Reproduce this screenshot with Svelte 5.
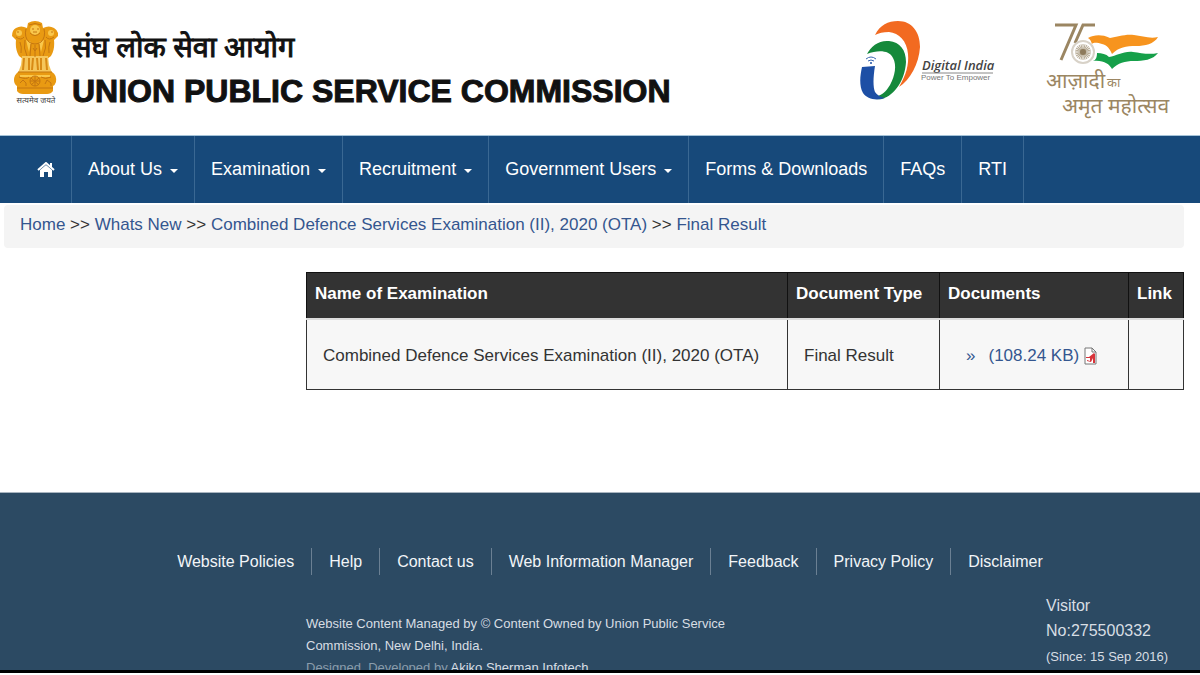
<script>
    const menu = [
        { label: "About Us", sub: true },
        { label: "Examination", sub: true },
        { label: "Recruitment", sub: true },
        { label: "Government Users", sub: true },
        { label: "Forms & Downloads", sub: false },
        { label: "FAQs", sub: false },
        { label: "RTI", sub: false },
    ];

    const crumbs = [
        "Home",
        "Whats New",
        "Combined Defence Services Examination (II), 2020 (OTA)",
        "Final Result",
    ];

    const footerLinks = [
        "Website Policies",
        "Help",
        "Contact us",
        "Web Information Manager",
        "Feedback",
        "Privacy Policy",
        "Disclaimer",
    ];

    const spokes = Array.from({ length: 24 }, (_, i) => i * 15);
</script>

<div class="page">
    <header>
        <svg class="emblem" viewBox="0 0 46 86" width="46" height="86" role="img" aria-label="State Emblem of India">
            <g fill="#e99a12">
                <path d="M16 3q7-4 14 0l1 5q6-3 11 0 5 3 4 8l-4 4q1 10-3 16l-4 3H11l-4-3Q3 30 4 20l-4-4q0-6 4-8 5-3 11 0z" />
                <path d="M10 36h26l1 9 3 8H6l3-8z" fill="#f6c65a" />
                <path d="M6 52h34q5 3 4 10-1 3-3 4v5q-2 3-6 3H11q-4 0-6-3v-5q-3-2-3-6 0-5 4-8z" />
            </g>
            <g fill="#f9c74c">
                <circle cx="23" cy="10" r="5" />
                <circle cx="7" cy="13" r="3" />
                <circle cx="39" cy="13" r="3" />
                <path d="M14 20l3 12 2-10zM32 20l-3 12-2-10z" />
                <path d="M8 55h30v2H8z" />
            </g>
            <g fill="none" stroke="#c47610" stroke-width="1">
                <path d="M17 5q6-3 12 0M18 13q5 5 10 0M20 9h2M25 9h2M21 12h4" />
                <path d="M14 9q-2 8 3 13 6 4 12 0 5-5 3-13M4 17q5 4 8 0M42 17q-5 4-8 0M5 12h2M39 12h2" />
                <path d="M8 22q2 5 1 11M38 22q-2 5-1 11M13 20q-2 8 2 16M33 20q2 8-2 16M19 24l-1 12M23 25v12M27 24l1 12M21 28l2 3 2-3" />
                <path d="M12 38l-1 12M17 38v12M21 38l-1 12M25 38l1 12M29 38v12M34 38l1 12" stroke="#d88a14" stroke-width="2" />
                <path d="M6 52h34M5 68h36M7 57q8 3 10 0M29 57q4 3 10 0" />
                <circle cx="23" cy="61" r="5" />
                <path d="M23 56v10M18 61h10M19 58l8 7M27 58l-8 7M8 63l3-3 3 3v3M33 64l2-4 4 3v3" />
            </g>
            <text x="24" y="83" text-anchor="middle" class="motto">सत्यमेव जयते</text>
        </svg>

        <div class="titles">
            <p lang="hi">संघ लोक सेवा आयोग</p>
            <h1>UNION PUBLIC SERVICE COMMISSION</h1>
        </div>

        <svg class="digital" viewBox="0 0 136 82" width="136" height="82" role="img" aria-label="Digital India">
            <path d="M15 15C20 5 28 1 38 1c14 0 22 11 22 26-1 17-10 33-21 40 7-12 10-22 9-33-1-13-9-21-19-22-6 0-10 1-14 3z" fill="#f26a21" />
            <path d="M7 34c4-8 12-14 22-13 11 1 17 9 17 21-1 18-11 33-24 37-6 1-9-1-10-4 8 3 13-2 18-10 5-9 7-20 3-27-4-8-15-8-26-4z" fill="#15893b" />
            <path d="M2 47l13-1c-2 12-2 21 0 26 2 3 5 5 10 6-9 3-18 1-22-5-4-7-3-17-1-26z" fill="#1d4fa5" />
            <g fill="none" stroke="#3b67b1" stroke-width="1">
                <path d="M6 39q5-4 10 0M8 41q3-2 6 0" />
            </g>
            <circle cx="11" cy="43" r="1" fill="#1d4fa5" />
            <text x="62" y="50" class="di-name">Digital India</text>
            <path d="M62 53h71" stroke="#888" />
            <text x="61" y="60" class="di-tag">Power To Empower</text>
        </svg>

        <svg class="azadi" viewBox="0 0 126 100" width="126" height="100" role="img" aria-label="Azadi Ka Amrit Mahotsav">
            <g fill="none" stroke="#9b8662" stroke-width="3">
                <path d="M9 5h21L15 40" />
                <path d="M49 5H37l-8 18" />
            </g>
            <circle cx="37" cy="32" r="11" fill="#fff" stroke="#d8d2c8" stroke-width="2" />
            <g stroke="#b5a993" stroke-width="1">
                {#each spokes as angle}
                    <path d="M37 31v-7" transform="rotate({angle} 37 32)" />
                {/each}
            </g>
            <circle cx="37" cy="32" r="3" fill="#8d7a5c" />
            <path d="M42 18c6-3 13-4 22 0 8-1 14-4 24-3 8 1 16 4 24 2-4 7-13 9-22 9-10 0-17 1-24 8-2-5-5-9-10-10-4-1-8-2-10 0-1-3-2-5-4-6z" fill="#f7941e" />
            <path d="M47 41c3-1 4-4 4-8 5 0 9 1 12 4 8-1 14-6 24-5 8 1 16 3 25 1-5 7-15 8-24 8-9 0-16 2-22 8-3-5-8-9-19-8z" fill="#16a04a" />
            <text x="0" y="68" class="az-big">आज़ादी</text>
            <text x="61" y="67" class="az-small">का</text>
            <text x="16" y="93" class="az-big">अमृत महोत्सव</text>
        </svg>
    </header>

    <nav aria-label="Main">
        <ul>
            <li>
                <a href="#home" class="home" aria-label="Home">
                    <svg viewBox="0 0 18 16" width="18" height="16">
                        <path d="M9 3l6 5v7h-4v-5H7v5H3V8z" fill="#fff" />
                        <path d="M1 8l8-7 8 7M14 1v5" fill="none" stroke="#fff" stroke-width="2" />
                    </svg>
                </a>
            </li>
            {#each menu as item}
                <li>
                    <a href="#menu">
                        {item.label}
                        {#if item.sub}<span class="caret"></span>{/if}
                    </a>
                </li>
            {/each}
        </ul>
    </nav>

    <div class="breadcrumb">
        {#each crumbs as crumb, i}
            {#if i > 0}&nbsp;&gt;&gt;&nbsp;{/if}<a href="#crumb">{crumb}</a>
        {/each}
    </div>

    <main>
        <table>
            <thead>
                <tr>
                    <th class="name">Name of Examination</th>
                    <th class="type">Document Type</th>
                    <th class="docs">Documents</th>
                    <th>Link</th>
                </tr>
            </thead>
            <tbody>
                <tr>
                    <td>Combined Defence Services Examination (II), 2020 (OTA)</td>
                    <td>Final Result</td>
                    <td>
                        <a href="#pdf" class="file">
                            <span class="bullet">»</span>
                            (108.24 KB)
                            <svg viewBox="0 0 13 18" width="13" height="18" aria-hidden="true">
                                <path d="M1 1h7l4 4v12H1z" fill="#fff" stroke="#777" />
                                <path d="M8 1v4h4" fill="none" stroke="#777" />
                                <path d="M2 10h3l5-4 1 1v9H9v-5l-2 4-4-1v-1l3 1v-3H2z" fill="#d8333a" />
                            </svg>
                        </a>
                    </td>
                    <td></td>
                </tr>
            </tbody>
        </table>
    </main>

    <footer>
        <ul>
            {#each footerLinks as link}
                <li><a href="#footer">{link}</a></li>
            {/each}
        </ul>
        <div class="info">
            <div class="owner">
                <p>Website Content Managed by © Content Owned by Union Public Service Commission, New Delhi, India.</p>
                <p class="credit">Designed, Developed by <a href="#infotech">Akiko Sherman Infotech</a></p>
            </div>
            <div class="visitor">
                <p>Visitor No:275500332</p>
                <p class="since">(Since: 15 Sep 2016)</p>
            </div>
        </div>
    </footer>
</div>

<style>
    :global(body) {
        margin: 0;
        background: #fff;
    }

    .page {
        display: flex;
        flex-direction: column;
        height: 100vh;
        overflow: hidden;
        font-family: "Liberation Sans", Arial, sans-serif;
        font-size: 17px;
        color: #333;
    }

    a {
        color: #34568f;
        text-decoration: none;
    }

    p,
    h1,
    ul {
        margin: 0;
        padding: 0;
    }

    ul {
        list-style: none;
        display: flex;
    }

    svg {
        flex: none;
    }

    header {
        display: flex;
        align-items: flex-start;
        padding: 20px 28px 15px 12px;
    }

    .titles {
        flex: 1;
        padding-top: 8px;
        margin-left: 14px;
        color: #111;
        white-space: nowrap;
    }

    .titles p {
        font-family: "Noto Sans Devanagari", "Noto Sans", sans-serif;
        font-size: 29px;
        line-height: 45px;
        -webkit-text-stroke: 1px #111;
    }

    .titles h1 {
        font-size: 32px;
        line-height: 36px;
        -webkit-text-stroke: 1px #111;
    }

    .motto {
        font-family: "Noto Sans Devanagari", "Noto Sans", sans-serif;
        font-size: 8px;
        fill: #444;
    }

    .azadi {
        margin-left: 50px;
        overflow: visible;
    }

    .di-name {
        font-family: "Open Sans", sans-serif;
        font-size: 13px;
        font-style: italic;
        font-weight: 600;
        fill: #444;
    }

    .di-tag {
        font-size: 8px;
        fill: #777;
    }

    .az-big,
    .az-small {
        font-family: "Noto Sans Devanagari", "Noto Sans", sans-serif;
        font-size: 21px;
        fill: #9b8662;
    }

    .az-small {
        font-size: 13px;
    }

    nav {
        background: #17497a;
        border-top: 1px solid #a5c3d8;
    }

    nav li {
        border-right: 1px solid #3a6893;
    }

    nav a {
        display: flex;
        align-items: center;
        gap: 8px;
        height: 67px;
        padding: 0 16px;
        font-size: 18px;
        color: #fff;
        white-space: nowrap;
    }

    nav a.home {
        padding-left: 37px;
    }

    .caret {
        margin-top: 2px;
        border: 4px solid transparent;
        border-top-color: #fff;
        border-bottom: 0;
    }

    .breadcrumb {
        margin: 2px 16px 0 4px;
        padding: 0 16px 3px;
        background: #f4f4f4;
        border-radius: 4px;
        line-height: 40px;
    }

    main {
        padding: 24px 16px 102px 306px;
    }

    table {
        width: 100%;
        border-collapse: collapse;
        table-layout: fixed;
    }

    th {
        height: 42px;
        padding: 0 8px 3px;
        background: #333;
        border: 1px solid #111;
        border-bottom: 2px solid #ddd;
        color: #fff;
        text-align: left;
        white-space: nowrap;
    }

    .name {
        width: 464px;
    }

    .type {
        width: 135px;
    }

    .docs {
        width: 172px;
    }

    td {
        height: 67px;
        padding: 2px 16px 0;
        background: #f7f7f7;
        border: 1px solid #333;
        white-space: nowrap;
    }

    .file {
        display: flex;
        align-items: center;
        gap: 5px;
        padding-left: 10px;
    }

    .bullet {
        margin-right: 8px;
    }

    footer {
        flex: 1;
        min-height: 0;
        overflow: hidden;
        background: #2c4a63;
        border-top: 1px solid #a9b5c0;
        border-bottom: 3px solid #000;
        margin-bottom: 2px;
        color: #d8dee4;
    }

    footer ul {
        justify-content: center;
        padding: 55px 0 18px 20px;
    }

    footer li {
        padding: 0 17px;
        border-right: 1px solid #6b8093;
        font-size: 16px;
        line-height: 27px;
    }

    footer li:last-child {
        border-right: 0;
    }

    footer a {
        color: #f2f5f8;
    }

    .info {
        display: flex;
        justify-content: space-between;
        padding: 0 24px 0 306px;
    }

    .owner {
        width: 430px;
        padding-top: 20px;
        font-size: 13px;
        line-height: 22px;
    }

    .credit {
        color: #8b9dac;
    }

    .credit a {
        color: #d8dee4;
    }

    .visitor {
        width: 130px;
        font-size: 16px;
        line-height: 25px;
    }

    .visitor p:first-child {
        width: 110px;
    }

    .since {
        font-size: 13px;
        line-height: 28px;
        white-space: nowrap;
    }
</style>
